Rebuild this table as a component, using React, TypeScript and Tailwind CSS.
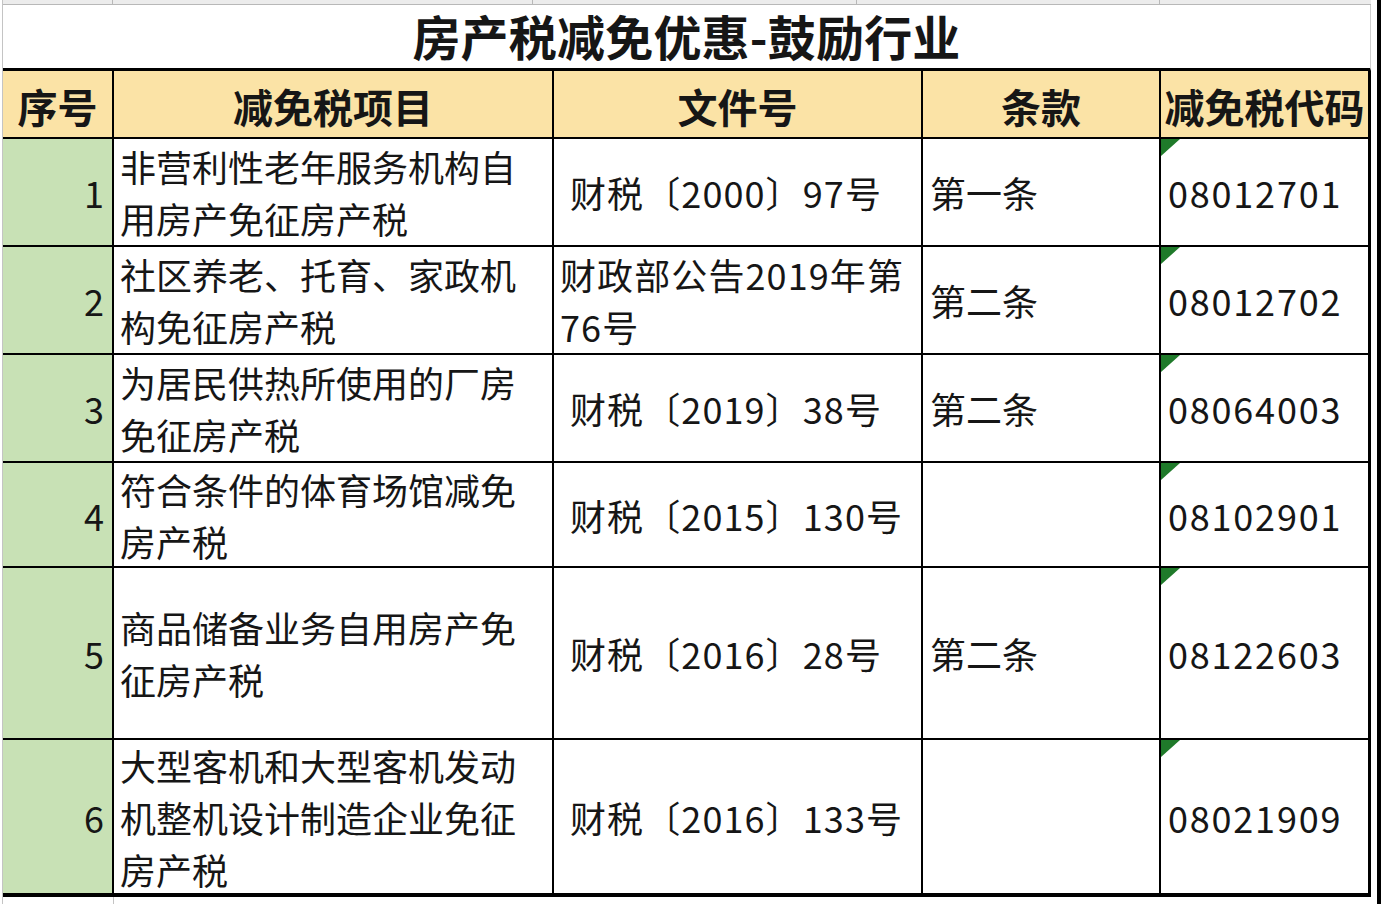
import React from "react";

type Row = {
  no: number;
  item: string[];
  doc: string[];
  docIndent?: boolean;
  clause: string;
  code: string;
  h: string;
  last?: boolean;
};

const rows: Row[] = [
  { no: 1, item: ["非营利性老年服务机构自", "用房产免征房产税"], doc: ["财税〔2000〕97号"], docIndent: true, clause: "第一条", code: "08012701", h: "h-[108px]" },
  { no: 2, item: ["社区养老、托育、家政机", "构免征房产税"], doc: ["财政部公告2019年第", "76号"], clause: "第二条", code: "08012702", h: "h-[108px]" },
  { no: 3, item: ["为居民供热所使用的厂房", "免征房产税"], doc: ["财税〔2019〕38号"], docIndent: true, clause: "第二条", code: "08064003", h: "h-[108px]" },
  { no: 4, item: ["符合条件的体育场馆减免", "房产税"], doc: ["财税〔2015〕130号"], docIndent: true, clause: "", code: "08102901", h: "h-[105px]" },
  { no: 5, item: ["商品储备业务自用房产免", "征房产税"], doc: ["财税〔2016〕28号"], docIndent: true, clause: "第二条", code: "08122603", h: "h-[172px]" },
  { no: 6, item: ["大型客机和大型客机发动", "机整机设计制造企业免征", "房产税"], doc: ["财税〔2016〕133号"], docIndent: true, clause: "", code: "08021909", h: "h-[157px]", last: true },
];

const headers = ["序号", "减免税项目", "文件号", "条款", "减免税代码"];

function Lines({ lines }: { lines: string[] }) {
  return (
    <div className="leading-[52px]">
      {lines.map((l, i) => (
        <div key={i} className="whitespace-nowrap">{l}</div>
      ))}
    </div>
  );
}

export default function App() {
  return (
    <div className="w-[1384px] h-[904px] bg-white flex overflow-hidden text-[#161616] font-['Noto_Sans_CJK_SC','Noto_Sans',sans-serif]">
      <div className="w-[3px] shrink-0 border-r border-[#c4c4c4]" />

      <div className="w-[1368px] shrink-0 flex flex-col">
        {/* 顶部网格线 */}
        <div className="h-[5px] grid grid-cols-[110px_420px_324px_303px_1fr] bg-[#ececec] border-b border-[#b8b8b8]">
          <div className="border-r border-[#b8b8b8]" />
          <div className="border-r border-[#b8b8b8]" />
          <div className="border-r border-[#b8b8b8]" />
          <div className="border-r border-[#b8b8b8]" />
          <div />
        </div>

        {/* 标题 */}
        <div className="h-[66px] flex items-center justify-center pb-[4px] border-b-[3px] border-black border-r border-r-[#cfcfcf]">
          <span className="text-[48px] font-bold leading-none tracking-[0.2px]">房产税减免优惠-鼓励行业</span>
        </div>

        <div className="grid grid-cols-[111px_440px_369px_238px_210px]">
          {headers.map((t, i) => (
            <div
              key={t}
              className={`h-[68px] bg-[#fbe3a6] border-b-2 border-black flex items-center justify-center pt-[3px] text-[40px] font-bold leading-none ${
                i === 4 ? "border-r-[3px]" : "border-r-2"
              }`}
            >
              {t}
            </div>
          ))}

          {rows.map((r) => {
            const b = r.last ? "border-b-4" : "border-b-2";
            return (
              <React.Fragment key={r.no}>
                <div className={`${r.h} ${b} border-r-2 border-black bg-[#c8e1b5] flex items-center justify-end pr-[8px] text-[36px] leading-none`}>
                  {r.no}
                </div>
                <div className={`${r.h} ${b} border-r-2 border-black flex items-center pl-[6px] text-[36px]`}>
                  <Lines lines={r.item} />
                </div>
                <div className={`${r.h} ${b} border-r-2 border-black flex items-center text-[36px] tracking-[1.1px] ${r.docIndent ? "pl-[16px]" : "pl-[6px]"}`}>
                  <Lines lines={r.doc} />
                </div>
                <div className={`${r.h} ${b} border-r-2 border-black flex items-center pl-[7px] text-[36px]`}>
                  {r.clause && <Lines lines={[r.clause]} />}
                </div>
                <div className={`${r.h} ${b} border-r-[3px] border-black relative flex items-center pl-[7px] text-[36px] tracking-[1.8px]`}>
                  <svg className="absolute left-0 top-0" width="19" height="17" viewBox="0 0 19 17">
                    <polygon points="0,0 19,0 0,17" fill="#1f7a2a" />
                  </svg>
                  <Lines lines={[r.code]} />
                </div>
              </React.Fragment>
            );
          })}
        </div>

        {/* 底部网格线 */}
        <div className="flex-1 grid grid-cols-[111px_1fr]">
          <div className="border-r border-[#c4c4c4]" />
          <div />
        </div>
      </div>

      <div className="w-[6px] shrink-0" />
      <div className="w-[4px] shrink-0 bg-black" />
      <div className="flex-1" />
    </div>
  );
}
